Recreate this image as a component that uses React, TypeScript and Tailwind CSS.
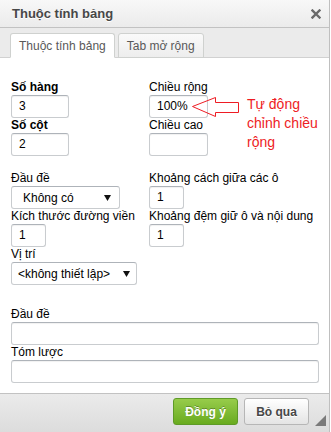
import type { ReactNode } from "react";

function Label({ children, bold }: { children: ReactNode; bold?: boolean }) {
  return <div className={`h-[15px] whitespace-nowrap leading-[15px] text-black ${bold ? "font-bold" : ""}`}>{children}</div>;
}

function Field({ value, className = "" }: { value?: string; className?: string }) {
  return (
    <div className={`h-[23px] rounded-[3px] border border-[#c9cccf] border-t-[#aeb3b9] bg-white pl-[7px] leading-[21px] text-black shadow-[inset_0_1px_1px_rgba(0,0,0,0.06)] ${className}`}>
      {value}
    </div>
  );
}

function Select({ value, className = "" }: { value: string; className?: string }) {
  return (
    <div className={`flex h-[23px] items-center justify-between rounded-[3px] border border-[#c9cccf] border-t-[#aeb3b9] bg-white text-black ${className}`}>
      <span>{value}</span>
      <svg width="7" height="6" viewBox="0 0 7 6" aria-hidden="true"><path d="M0 0h7L3.5 6z" fill="#111" /></svg>
    </div>
  );
}

export default function App() {
  return (
    <div className="h-[432px] w-[331px] overflow-hidden bg-white font-['Liberation_Sans',Arial,sans-serif] text-[12px]">
      <div className="flex h-full w-[330px] flex-col border-r border-[#bfbfbf]">
        <header className="flex h-[28px] shrink-0 items-center justify-between border-b border-[#c2c2c2] bg-gradient-to-b from-[#f8f8f8] to-[#ebebeb] pl-[12px] pr-[8px]">
          <h1 className="pt-[1px] text-[13px] font-bold text-[#474747] [text-shadow:0_1px_0_#fff]">Thuộc tính bảng</h1>
          <svg width="10" height="10" viewBox="0 0 10 10" aria-hidden="true">
            <path d="M1.5 1.5l7 7M8.5 1.5l-7 7" stroke="#6b6b6b" strokeWidth="2.4" strokeLinecap="square" />
          </svg>
        </header>

        <nav className="flex shrink-0 gap-[3px] border-b border-[#d1d1d1] bg-[#ebebeb] pl-[10px] pt-[5px]">
          <div className="-mb-px h-[25px] rounded-t-[3px] border border-[#cfd1cf] border-b-white bg-white px-[8px] leading-[24px] text-[#595959]">Thuộc tính bảng</div>
          <div className="-mb-px h-[25px] rounded-t-[3px] border border-[#cfd1cf] bg-gradient-to-b from-[#fafafa] to-[#ededed] px-[8px] leading-[24px] text-[#595959]">Tab mở rộng</div>
        </nav>

        <main className="flex-1 px-[11px] pt-[22px]">
          <div className="grid grid-cols-[138px_1fr]">
            <div>
              <Label bold>Số hàng</Label>
              <Field value="3" className="w-[58px]" />
              <Label bold>Số cột</Label>
              <Field value="2" className="w-[58px]" />
            </div>
            <div className="relative">
              <Label>Chiều rộng</Label>
              <Field value="100%" className="w-[59px]" />
              <Label>Chiều cao</Label>
              <Field className="w-[59px]" />
              <svg className="absolute left-[31px] top-[15px]" width="60" height="24" viewBox="0 0 60 24" aria-hidden="true">
                <polygon points="12.5,11.5 35.5,2.5 35.5,7.5 58.5,7.5 58.5,17.5 35.5,17.5 35.5,21.5" fill="none" stroke="#ee1c24" strokeWidth="1" />
              </svg>
              <p className="absolute left-[98px] top-[15px] whitespace-nowrap text-[14px] leading-[19px] text-[#ee1c24]">
                Tự động
                <br />
                chỉnh chiều
                <br />
                rộng
              </p>
            </div>
          </div>

          <div className="mt-[15px] grid grid-cols-[138px_1fr]">
            <div>
              <Label>Đầu đề</Label>
              <Select value="Không có" className="w-[109px] pl-[11px] pr-[8px]" />
              <Label>Kích thước đường viền</Label>
              <Field value="1" className="w-[35px]" />
              <Label>Vị trí</Label>
              <Select value="<không thiết lập>" className="w-[126px] pl-[6px] pr-[6px]" />
            </div>
            <div>
              <Label>Khoảng cách giữa các ô</Label>
              <Field value="1" className="w-[35px]" />
              <Label>Khoảng đệm giữ ô và nội dung</Label>
              <Field value="1" className="w-[35px]" />
            </div>
          </div>

          <div className="mt-[22px]">
            <Label>Đầu đề</Label>
            <Field className="w-[308px]" />
            <Label>Tóm lược</Label>
            <Field className="w-[308px]" />
          </div>
        </main>

        <footer className="relative flex h-[39px] shrink-0 justify-end gap-[6px] border-t border-[#c2c2c2] bg-gradient-to-b from-[#ebebeb] to-[#dcdcdc] pr-[20px] pt-[4px]">
          <button type="button" className="h-[27px] w-[65px] rounded-[3px] border border-[#5e9a27] bg-gradient-to-b from-[#97cc4a] to-[#69ab1e] text-[12px] font-bold text-white [text-shadow:0_-1px_0_rgba(0,0,0,0.3)]">Đồng ý</button>
          <button type="button" className="h-[27px] w-[65px] rounded-[3px] border border-[#b6b6b6] bg-gradient-to-b from-white to-[#e4e4e4] text-[12px] font-bold text-[#474747] [text-shadow:0_1px_0_#fff]">Bỏ qua</button>
          <svg className="absolute bottom-[6px] right-[3px]" width="11" height="11" viewBox="0 0 11 11" aria-hidden="true"><path d="M11 0V11H0z" fill="#7a7a7a" /></svg>
        </footer>
      </div>
    </div>
  );
}
